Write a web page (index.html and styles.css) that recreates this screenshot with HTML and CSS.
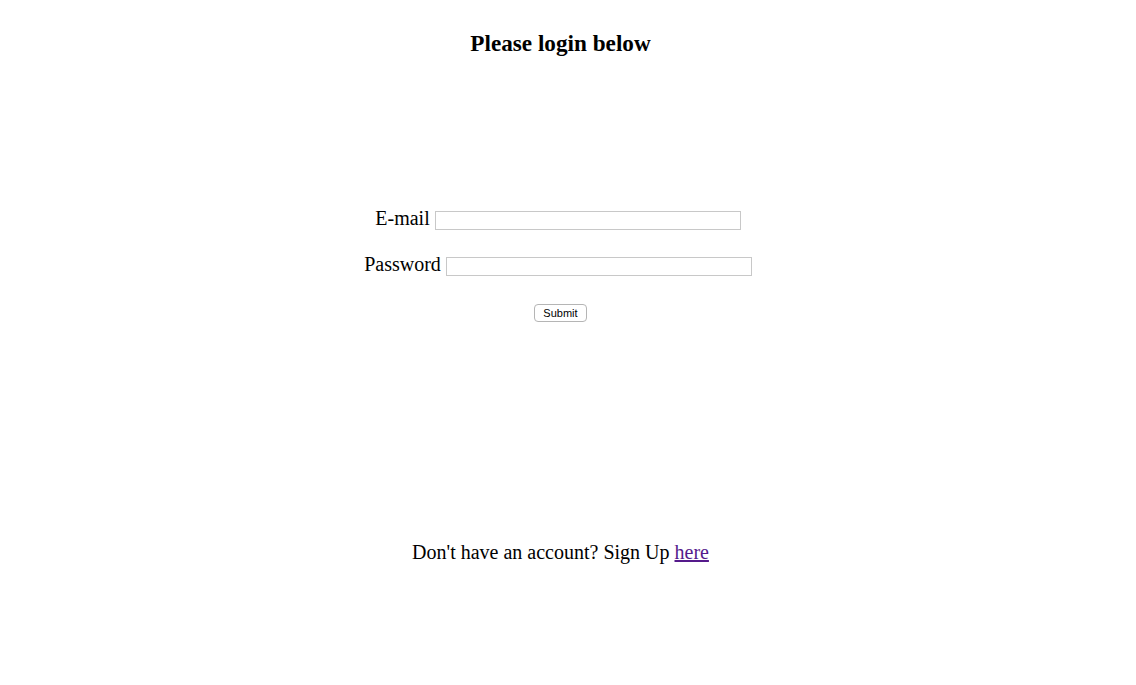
FILE: index.html
```html
<!DOCTYPE html>
<html>
<head>
<meta charset="utf-8">
<link rel="stylesheet" href="styles.css">
</head>
<body>
<div class="page">
  <h2 class="title">Please login below</h2>
  <form class="form">
    <div class="row"><label>E-mail</label> <input class="field" type="text"></div>
    <div class="row"><label>Password</label> <input class="field" type="password"></div>
    <div class="row submit-row"><button class="submit" type="button">Submit</button></div>
  </form>
  <p class="footer">Don't have an account? Sign Up <a href="#" class="link">here</a></p>
</div>
</body>
</html>
```
FILE: styles.css
```css
html, body {
  margin: 0;
  padding: 0;
  background: #fff;
}
body {
  font-family: "Liberation Serif", "Times New Roman", serif;
  color: #000;
}
.page {
  width: 1121px;
  display: flex;
  flex-direction: column;
  align-items: center;
}
.title {
  font-size: 23.2px;
  font-weight: bold;
  margin: 29px 0 0;
  line-height: 28px;
}
.form {
  margin-top: 150px;
  display: flex;
  flex-direction: column;
  align-items: center;
}
.row {
  font-size: 20px;
  line-height: 23px;
  height: 23px;
  margin-bottom: 23px;
  white-space: nowrap;
}
.field {
  width: 306px;
  height: 19px;
  box-sizing: border-box;
  border: 1px solid #c8c8c8;
  margin: 0 5px 0 0;
  padding: 0;
  vertical-align: 0;
}
.submit-row {
  margin-bottom: 0;
  height: auto;
}
.submit {
  font-family: "Liberation Sans", Arial, sans-serif;
  font-size: 11px;
  width: 53px;
  height: 18px;
  padding: 0;
  background: #fff;
  border: 1px solid #b5b5b5;
  border-radius: 4px;
  color: #000;
}
.footer {
  font-size: 20px;
  line-height: 23px;
  margin: 219px 0 0;
}
.link {
  color: #551a8b;
}
```
